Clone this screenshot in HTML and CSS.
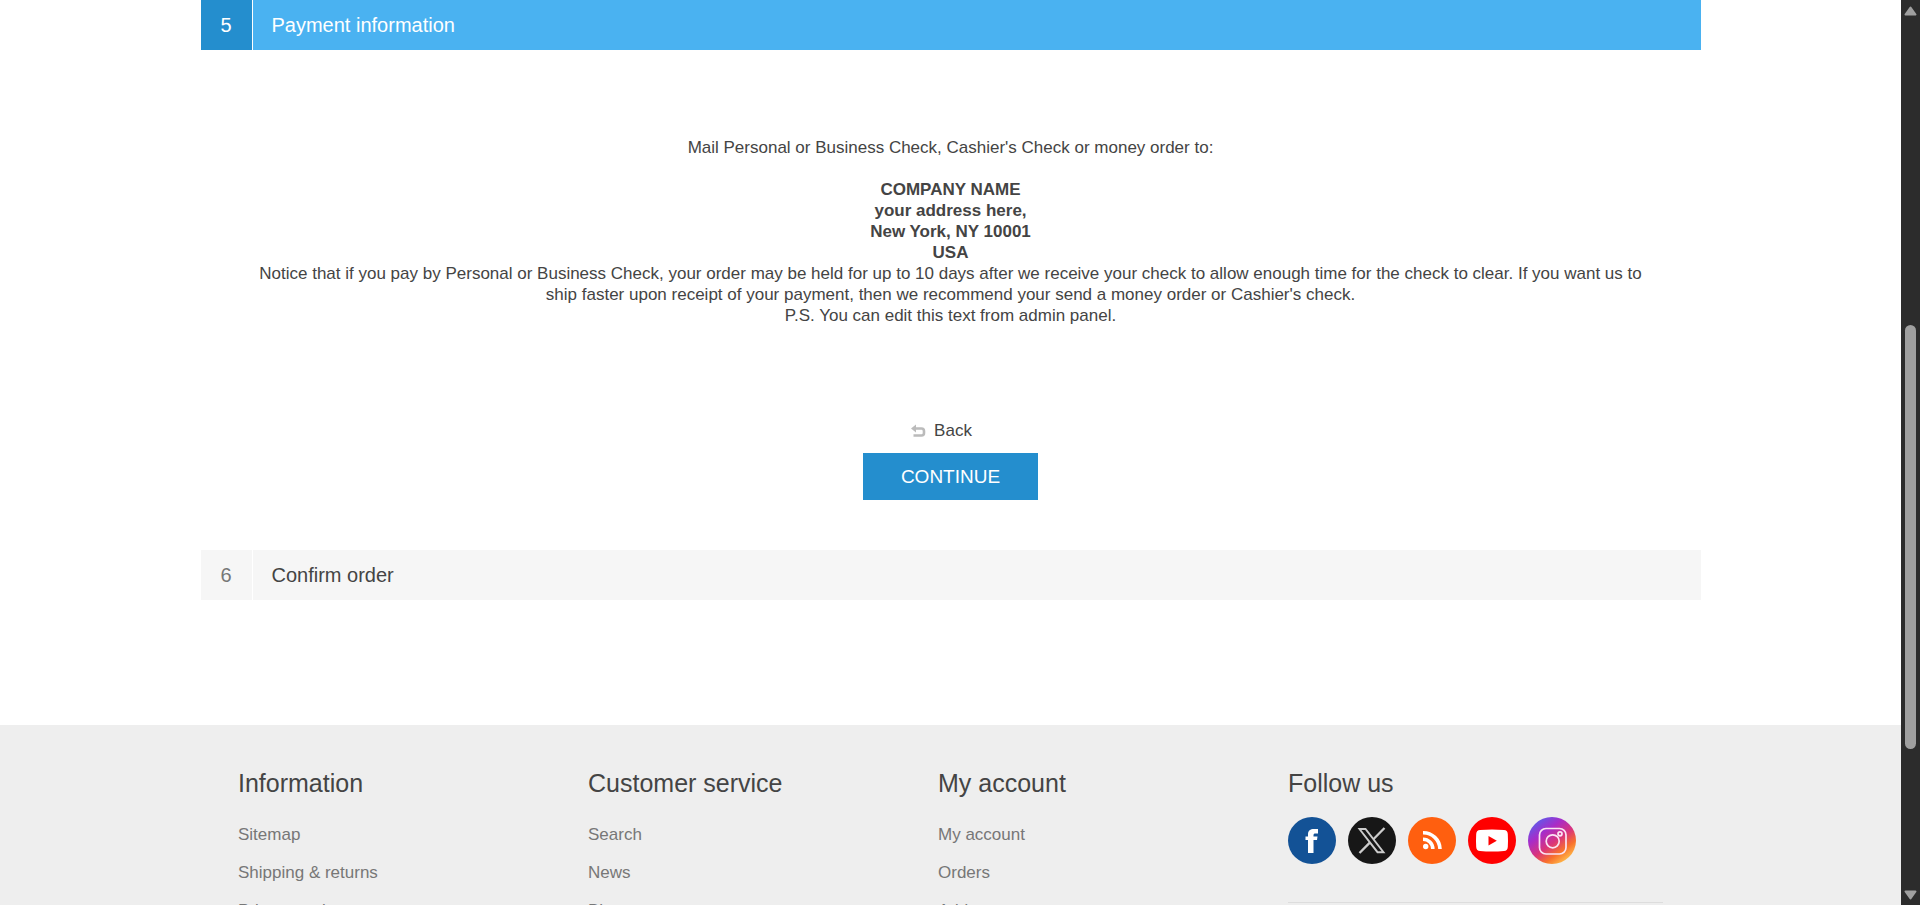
FILE: index.html
```html
<!DOCTYPE html>
<html lang="en">
<head>
<meta charset="utf-8">
<title>Checkout</title>
<link rel="stylesheet" href="styles.css">
</head>
<body>
<div class="page">
  <main class="content">
    <ol class="steps">
      <li class="step">
        <div class="step-title active"><span class="number">5</span><h2 class="title">Payment information</h2></div>
        <div class="step-body">
          <div class="info">
            <p>Mail Personal or Business Check, Cashier's Check or money order to:</p>
            <br>
            <p><b>COMPANY NAME</b><br><b>your address here,</b><br><b>New York, NY 10001</b><br><b>USA</b></p>
            <p>Notice that if you pay by Personal or Business Check, your order may be held for up to 10 days after we receive your check to allow enough time for the check to clear. If you want us to ship faster upon receipt of your payment, then we recommend your send a money order or Cashier's check.</p>
            <p>P.S. You can edit this text from admin panel.</p>
          </div>
          <div class="buttons">
            <a class="back" href="#">
              <svg width="15" height="14" viewBox="0 0 15 14" aria-hidden="true"><path d="M4 4.500H10.500Q13 4.500 13 7.200V9Q13 11.500 10.500 11.500H2.500" fill="none" stroke="#bbb" stroke-width="2.600"/><path d="M0 4.500L5 .500V8.500Z" fill="#bbb"/></svg>
              Back</a>
            <button class="continue" type="button">CONTINUE</button>
          </div>
        </div>
      </li>
      <li class="step">
        <div class="step-title"><span class="number">6</span><h2 class="title">Confirm order</h2></div>
      </li>
    </ol>
  </main>
  <footer class="footer">
    <div class="footer-inner">
      <nav class="column">
        <h3>Information</h3>
        <a href="#">Sitemap</a><a href="#">Shipping &amp; returns</a><a href="#">Privacy notice</a>
      </nav>
      <nav class="column">
        <h3>Customer service</h3>
        <a href="#">Search</a><a href="#">News</a><a href="#">Blog</a>
      </nav>
      <nav class="column">
        <h3>My account</h3>
        <a href="#">My account</a><a href="#">Orders</a><a href="#">Addresses</a>
      </nav>
      <section class="column follow">
        <h3>Follow us</h3>
        <div class="social">
          <a href="#" aria-label="Facebook"><svg viewBox="0 0 48 47"><ellipse cx="24" cy="23.500" rx="24" ry="23.500" fill="#135296"/><path d="M20 36V23H17.500V19.500H20V17.500C20 13.500 22.300 12 26 12H30V16.500H27.500C26 16.500 25.500 17 25.500 18.500V19.500H29.500L29 23H25.500V36Z" fill="#fff"/></svg></a>
          <a href="#" aria-label="X"><svg viewBox="0 0 48 47"><ellipse cx="24" cy="23.500" rx="24" ry="23.500" fill="#171717"/><path d="M11.500 12H17.500L35.500 35.200H29.500Z" fill="none" stroke="#ccc" stroke-width="1.900"/><path d="M36.500 11L25.400 22.200M21.800 25.600L11.500 36" fill="none" stroke="#ccc" stroke-width="2.300"/></svg></a>
          <a href="#" aria-label="RSS"><svg viewBox="0 0 48 47"><ellipse cx="24" cy="23.500" rx="24" ry="23.500" fill="#ff5f0f"/><circle cx="17.700" cy="29.500" r="2.700" fill="#fff"/><path d="M15 22.200A9.800 9.800 0 0 1 24.800 32M15 15.700A16.800 16.800 0 0 1 32 32" fill="none" stroke="#fff" stroke-width="3.600"/></svg></a>
          <a href="#" aria-label="YouTube"><svg viewBox="0 0 48 47"><ellipse cx="24" cy="23.500" rx="24" ry="23.500" fill="#f00"/><path d="M12 13Q24 12 36 13Q39.500 13.200 39.800 17Q40.200 23.500 39.800 30Q39.500 33.800 36 34Q24 35 12 34Q8.500 33.800 8.200 30Q7.800 23.500 8.200 17Q8.500 13.200 12 13Z" fill="#fff"/><path d="M20.500 19V28.500L28.800 23.700Z" fill="#f00"/></svg></a>
          <a href="#" aria-label="Instagram"><svg viewBox="0 0 48 47"><defs><linearGradient id="ig" x1=".15" y1=".1" x2=".78" y2=".95"><stop offset="0" stop-color="#6258e8"/><stop offset=".28" stop-color="#a82cc8"/><stop offset=".55" stop-color="#d9347c"/><stop offset=".78" stop-color="#f8702c"/><stop offset="1" stop-color="#ffbd4a"/></linearGradient></defs><ellipse cx="24" cy="23.500" rx="24" ry="23.500" fill="url(#ig)"/><g fill="none" stroke="#fbe4f4" stroke-width="1.700"><rect x="11.500" y="11.500" width="26.500" height="25.500" rx="6.500"/><circle cx="24.700" cy="24.300" r="6.500"/><circle cx="32" cy="16.800" r="2"/></g></svg></a>
        </div>
        <hr>
      </section>
    </div>
  </footer>
</div>
<div class="scrollbar" aria-hidden="true">
  <svg width="13" height="10" viewBox="0 0 13 10"><path d="M6.500 1.500L11.500 8.500H1.500Z" fill="#9f9f9f" stroke="#9f9f9f" stroke-width="2" stroke-linejoin="round"/></svg>
  <div class="track"><div class="thumb"></div></div>
  <svg width="13" height="10" viewBox="0 0 13 10"><path d="M6.500 8.500L11.500 1.500H1.500Z" fill="#9f9f9f" stroke="#9f9f9f" stroke-width="2" stroke-linejoin="round"/></svg>
</div>
</body>
</html>
```
FILE: styles.css
```css
* { box-sizing: border-box; }
body {
  margin: 0;
  display: flex;
  height: 100vh;
  overflow: hidden;
  background: #fff;
  color: #444;
  font: 17px/21px "Liberation Sans", Arial, sans-serif;
}
h2, h3, p { margin: 0; font-weight: normal; }
a { color: inherit; text-decoration: none; }
.page { flex: 1; overflow: hidden; }
.content { max-width: 1500px; margin: 0 auto; padding-bottom: 125px; }
.steps { margin: 0; padding: 0; list-style: none; }
.step-title { display: flex; gap: 1px; line-height: 50px; }
.number, .title { background: #f6f6f6; font-size: 20px; }
.number { width: 51px; text-align: center; color: #777; }
.title { flex: 1; padding-left: 19px; }
.active { color: #fff; }
.active .number { background: #248ece; color: #fff; }
.active .title { background: #4ab2f1; }
.step-body { padding: 87px 48px 50px; text-align: center; }
.buttons { display: flex; flex-direction: column; align-items: center; gap: 12px; margin-top: 94px; }
.back { display: flex; align-items: center; gap: 8px; padding-right: 18px; }
.continue {
  padding: 12px 38px;
  border: 0;
  background: #248ece;
  color: #fff;
  font: 19px/23px "Liberation Sans", Arial, sans-serif;
}
.footer { background: #eee; padding-top: 43px; }
.footer-inner { display: flex; max-width: 1425px; margin: 0 auto; }
.column { flex: 350; color: #777; }
.follow { flex: 375; }
.column h3 { margin-bottom: 26px; color: #444; font-size: 25px; line-height: 30px; }
.column > a { display: block; margin-bottom: 17px; }
.follow h3 { margin-bottom: 19px; }
.social { display: flex; gap: 12px; }
.social svg { display: block; width: 48px; height: 47px; }
hr { margin: 38px 0; border: 0; border-top: 1px solid #ddd; }
.scrollbar {
  display: flex;
  flex-direction: column;
  align-items: center;
  width: 19px;
  padding: 6px 0 5px;
  background: #2c2c2c;
}
.track { flex: 1; display: grid; grid-template-rows: 309fr 424fr 141fr; }
.thumb { grid-row: 2; width: 11px; border-radius: 6px; background: #9f9f9f; }
```
